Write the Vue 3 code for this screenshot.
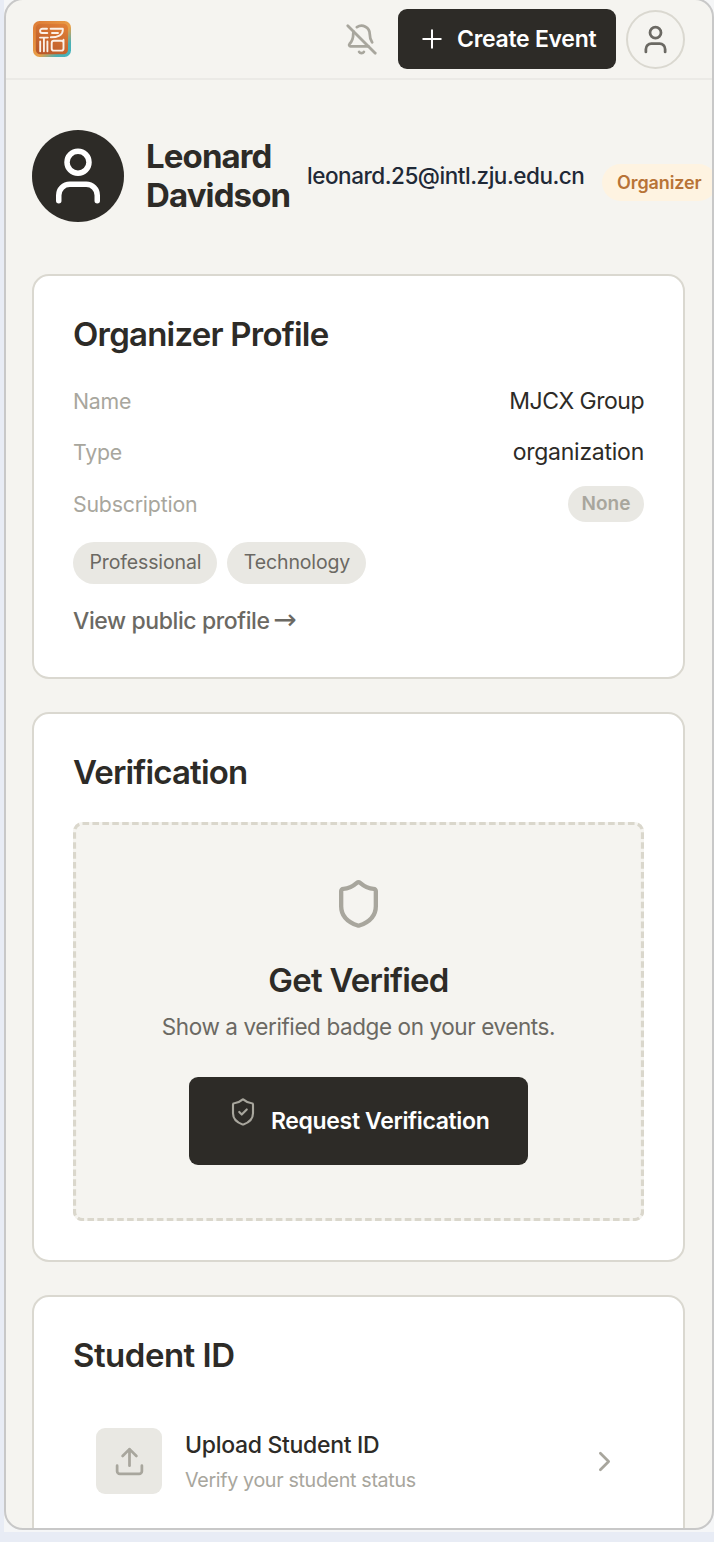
<script setup>
const details = [
  { label: 'Name', value: 'MJCX Group', tight: true },
  { label: 'Type', value: 'organization' },
  { label: 'Subscription', badge: 'None' },
]
const tags = ['Professional', 'Technology']
</script>

<template>
  <div class="stage">
    <div class="backdrop">
      <div class="window">
        <header class="topbar">
          <svg class="logo" viewBox="0 0 38 36" fill="none">
            <defs>
              <linearGradient id="logo-rim" x1="6" y1="2" x2="36" y2="34" gradientUnits="userSpaceOnUse">
                <stop offset="0" stop-color="#e08038" />
                <stop offset="0.55" stop-color="#e9a048" />
                <stop offset="0.82" stop-color="#4bb0b4" />
                <stop offset="1" stop-color="#45b3bd" />
              </linearGradient>
              <linearGradient id="logo-face" x1="28" y1="3" x2="12" y2="34" gradientUnits="userSpaceOnUse">
                <stop offset="0" stop-color="#e07f36" />
                <stop offset="1" stop-color="#b9582a" />
              </linearGradient>
            </defs>
            <rect width="38" height="36" rx="6.5" fill="url(#logo-rim)" />
            <rect x="2.8" y="2.8" width="32.2" height="30.4" rx="4.5" fill="url(#logo-face)" />
            <g stroke="#fbf1e8" stroke-width="1.9" stroke-linecap="round" stroke-linejoin="round">
              <path d="M14 7.7H9.3A2.2 2.2 0 0 0 7.1 10a2 2 0 0 0 2 2h5.2" />
              <path d="M7 16.6h7.8M10.9 17v13.2M7.2 20.5v9.7M14.4 20.5v9.7" />
              <path d="M17.6 7.7h12.2v1.6c0 4.7-5.3 7-12 7M19 12h6" />
              <path d="M20.9 19.8h7.4a2.2 2.2 0 0 1 2.2 2.2v5.4a2.2 2.2 0 0 1-2.2 2.2h-7.4a2.2 2.2 0 0 1-2.2-2.2v-5.4a2.2 2.2 0 0 1 2.2-2.2zM30.5 18.8v4" />
            </g>
          </svg>
          <div class="actions">
            <svg class="icon bell" viewBox="0 0 24 24">
              <path d="M10.268 21a2 2 0 0 0 3.464 0" />
              <path d="M17 17H4a1 1 0 0 1-.74-1.673C4.59 13.956 6 12.499 6 8a6 6 0 0 1 .258-1.742" />
              <path d="m2 2 20 20" />
              <path d="M8.668 3.01A6 6 0 0 1 18 8c0 2.687.77 4.653 1.707 6.05" />
            </svg>
            <button class="create">
              <svg class="icon plus" viewBox="0 0 24 24"><path d="M5 12h14M12 5v14" /></svg>
              <span>Create Event</span>
            </button>
            <div class="account">
              <svg class="icon" viewBox="0 0 24 24">
                <path d="M19 21v-2a4 4 0 0 0-4-4H9a4 4 0 0 0-4 4v2" />
                <circle cx="12" cy="7" r="4" />
              </svg>
            </div>
          </div>
        </header>

        <main class="content">
          <section class="profile">
            <div class="avatar">
              <svg class="icon" viewBox="0 0 24 24">
                <path d="M19 21v-2a4 4 0 0 0-4-4H9a4 4 0 0 0-4 4v2" />
                <circle cx="12" cy="7" r="4" />
              </svg>
            </div>
            <h1>Leonard<br />Davidson</h1>
            <span class="email">leonard.25@intl.zju.edu.cn</span>
            <span class="role">Organizer</span>
          </section>

          <section class="card">
            <h2>Organizer Profile</h2>
            <dl class="details">
              <div v-for="row in details" :key="row.label" class="detail">
                <dt>{{ row.label }}</dt>
                <dd v-if="row.badge" class="plan">{{ row.badge }}</dd>
                <dd v-else :class="{ tight: row.tight }">{{ row.value }}</dd>
              </div>
            </dl>
            <div class="tags">
              <span v-for="tag in tags" :key="tag" class="tag">{{ tag }}</span>
            </div>
            <a class="link">View public profile <span class="arrow">→</span></a>
          </section>

          <section class="card">
            <h2 class="snug">Verification</h2>
            <div class="verify">
              <svg class="dashes" viewBox="0 0 571 399">
                <rect x="1.5" y="1.5" width="568" height="396" rx="8" />
              </svg>
              <svg class="icon shield" viewBox="0 0 24 24">
                <path d="M20 13c0 5-3.5 7.5-7.66 8.95a1 1 0 0 1-.67-.01C7.5 20.5 4 18 4 13V6a1 1 0 0 1 1-1c2 0 4.5-1.2 6.24-2.72a1.17 1.17 0 0 1 1.52 0C14.51 3.81 17 5 19 5a1 1 0 0 1 1 1z" />
              </svg>
              <h3>Get Verified</h3>
              <p>Show a verified badge on your events.</p>
              <button class="request">
                <svg class="icon" viewBox="0 0 24 24">
                  <path d="M20 13c0 5-3.5 7.5-7.66 8.95a1 1 0 0 1-.67-.01C7.5 20.5 4 18 4 13V6a1 1 0 0 1 1-1c2 0 4.5-1.2 6.24-2.72a1.17 1.17 0 0 1 1.52 0C14.51 3.81 17 5 19 5a1 1 0 0 1 1 1z" />
                  <path d="m9 12 2 2 4-4" />
                </svg>
                <span>Request Verification</span>
              </button>
            </div>
          </section>

          <section class="card">
            <h2 class="wide">Student ID</h2>
            <div class="upload">
              <div class="tile">
                <svg class="icon" viewBox="0 0 24 24">
                  <path d="M21 15v4a2 2 0 0 1-2 2H5a2 2 0 0 1-2-2v-4M17 8l-5-5-5 5M12 3v12" />
                </svg>
              </div>
              <div class="copy">
                <strong>Upload Student ID</strong>
                <small>Verify your student status</small>
              </div>
              <svg class="icon chevron" viewBox="0 0 24 24"><path d="m9 18 6-6-6-6" /></svg>
            </div>
          </section>
        </main>
      </div>
    </div>
  </div>
</template>

<style>
body { margin: 0; background: #e8ecf5; }
</style>

<style scoped>
* { box-sizing: border-box; }
.stage {
  height: 1542px;
  padding-left: 4px;
  overflow: hidden;
  background: #e8ecf5;
  font-family: Inter, "Liberation Sans", sans-serif;
  color: #2d2b27;
}
.backdrop { height: 1532px; background: #f5f6f7; overflow: hidden; }
.window {
  height: 1532px;
  margin-top: -2px;
  border: 2px solid #c8c8c8;
  border-radius: 19px;
  background: #f5f4f0;
  overflow: hidden;
}
h1, h2, h3, p, dl, dd { margin: 0; }
button { border: 0; padding: 0; font: inherit; color: #fff; background: #2d2b27; border-radius: 9px; }
.icon {
  display: block;
  flex: none;
  width: 33px;
  height: 33px;
  fill: none;
  stroke: currentColor;
  stroke-width: 2;
  stroke-linecap: round;
  stroke-linejoin: round;
}

.topbar {
  display: flex;
  align-items: center;
  justify-content: space-between;
  height: 80px;
  padding: 0 27px;
  border-bottom: 2px solid #ebeae6;
}
.logo { width: 38px; height: 36px; }
.actions { display: flex; align-items: center; }
.bell { color: #a8a69d; margin-right: 20px; }
.create {
  display: flex;
  align-items: center;
  gap: 10px;
  width: 218px;
  height: 60px;
  padding-left: 19px;
  margin-right: 10px;
  font-size: 23px;
  font-weight: 600;
  letter-spacing: -0.28px;
  white-space: nowrap;
}
.plus { width: 30px; height: 30px; stroke-width: 1.6; }
.account {
  display: grid;
  place-items: center;
  width: 59px;
  height: 59px;
  border: 2px solid #dad8d0;
  border-radius: 50%;
  color: #6b6963;
}

.content { padding: 50px 27px 0 26px; }
.profile { display: flex; align-items: center; height: 91px; margin-bottom: 53px; white-space: nowrap; }
.avatar {
  display: grid;
  place-items: center;
  flex: none;
  width: 92px;
  height: 92px;
  margin-right: 22px;
  border-radius: 50%;
  background: #2d2b27;
  color: #fff;
}
.avatar .icon { width: 66px; height: 66px; }
h1 { flex: none; width: 161px; font-size: 33px; line-height: 39px; font-weight: 700; letter-spacing: -0.88px; }
.email { flex: none; width: 295px; font-size: 22.5px; font-weight: 500; letter-spacing: -0.47px; color: #1f2937; }
.role {
  flex: none;
  margin-top: 14px;
  padding: 0 15px;
  height: 37px;
  line-height: 37px;
  border-radius: 19px;
  background: #fef3e1;
  color: #b87337;
  font-size: 18px;
  font-weight: 600;
  letter-spacing: -0.1px;
}

.card {
  margin-bottom: 33px;
  padding: 39px;
  border: 2px solid #dad8d0;
  border-radius: 17px;
  background: #fff;
}
h2, h3 { font-size: 33px; line-height: 38px; font-weight: 600; letter-spacing: -0.78px; }
h2.snug { letter-spacing: -0.84px; }
h2.wide { letter-spacing: -0.5px; }

.details { display: grid; gap: 15.5px; margin-top: 30px; }
.detail { display: flex; justify-content: space-between; align-items: center; height: 36px; }
dt { font-size: 21.3px; line-height: 26px; letter-spacing: -0.2px; color: #a8a69d; padding-bottom: 1px; }
dd { font-size: 23px; line-height: 28px; letter-spacing: -0.25px; padding-bottom: 1px; }
dd.tight { letter-spacing: -0.5px; }
dd.plan {
  width: 76px;
  height: 36px;
  line-height: 36px;
  padding: 0;
  border-radius: 18px;
  background: #e9e8e3;
  color: #a8a69d;
  font-size: 19px;
  font-weight: 600;
  letter-spacing: 0;
  text-align: center;
}
.tags { display: flex; gap: 10px; margin-top: 20px; }
.tag {
  padding: 0 16px 0 16.5px;
  height: 42px;
  line-height: 41px;
  border-radius: 21px;
  background: #e9e8e3;
  color: #6b6963;
  font-size: 19.5px;
  letter-spacing: -0.13px;
}
.link { display: flex; margin-top: 20px; height: 34px; line-height: 34px; color: #6b6963; font-size: 23px; font-weight: 500; letter-spacing: -0.4px; white-space: pre; }
.arrow { font-family: "DejaVu Sans", sans-serif; font-size: 28px; font-weight: 400; line-height: 31px; margin-left: -2px; }

.verify {
  position: relative;
  display: flex;
  flex-direction: column;
  align-items: center;
  height: 399px;
  margin-top: 31px;
  padding-top: 56px;
  border-radius: 9px;
  background: #f5f4f0;
}
.dashes { position: absolute; left: 0; top: 0; width: 571px; height: 399px; }
.dashes rect { fill: none; stroke: #dad7cc; stroke-width: 3.2; stroke-dasharray: 6.6 3.317; }
.shield { width: 53px; height: 52px; color: #a8a69d; }
h3 { margin-top: 31px; }
.verify p { margin-top: 11px; line-height: 34px; font-size: 22.5px; letter-spacing: -0.41px; color: #6b6963; }
.request {
  display: flex;
  align-items: center;
  gap: 13px;
  width: 339px;
  height: 88px;
  margin-top: 33px;
  padding-left: 39px;
  font-size: 23px;
  font-weight: 600;
  letter-spacing: -0.35px;
  white-space: nowrap;
}
.request .icon { width: 30px; height: 30px; margin-bottom: 18px; stroke-width: 1.7; color: #a8a69d; }

.upload { display: flex; align-items: center; gap: 23px; height: 112px; margin-top: 31px; padding: 0 23px; }
.tile { display: grid; place-items: center; width: 66px; height: 66px; border-radius: 9px; background: #e9e8e3; color: #a8a69d; }
.copy { flex: 1; display: grid; gap: 3px; }
.copy strong { line-height: 34px; font-size: 23px; font-weight: 500; letter-spacing: -0.3px; }
.copy small { line-height: 30px; font-size: 19.7px; letter-spacing: -0.34px; color: #a8a69d; }
.chevron { color: #a8a69d; }
</style>
